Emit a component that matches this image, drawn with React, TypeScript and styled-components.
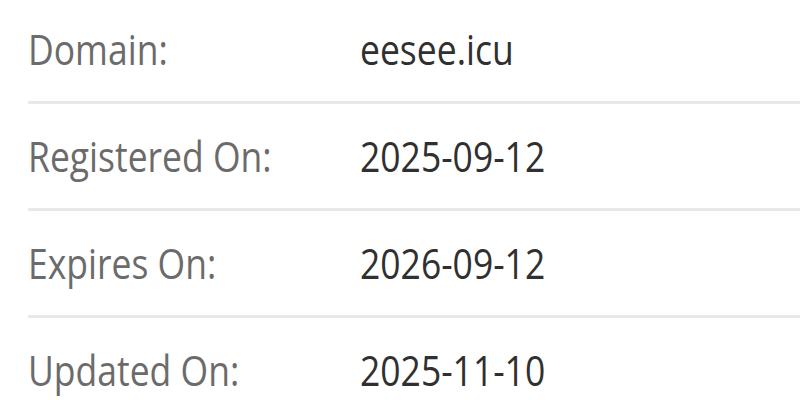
import styled, { createGlobalStyle } from "styled-components";

const GlobalStyle = createGlobalStyle`
  html, body {
    margin: 0;
    padding: 0;
    background: #ffffff;
    overflow: hidden;
  }
  body {
    font-family: "Open Sans", "Noto Sans", sans-serif;
  }
`;

const InfoList = styled.div`
  margin-top: -3px;
  padding-left: 28px;
  width: 772px;
`;

const InfoRow = styled.div`
  display: grid;
  grid-template-columns: 332px 1fr;
  align-items: baseline;
  padding: 23px 0 24px;
  border-bottom: 3px solid #e8e8e8;
`;

// the source text is a bit narrower than Open Sans, squeeze it horizontally
const Label = styled.span<{ $muted?: boolean }>`
  display: inline-block;
  font-size: 42px;
  line-height: 57px;
  transform: scaleX(0.845);
  transform-origin: left center;
  color: ${(props) => (props.$muted ? "#6b6b6b" : "#303030")};
  white-space: nowrap;
`;

const rows = [
  ["Domain:", "eesee.icu"],
  ["Registered On:", "2025-09-12"],
  ["Expires On:", "2026-09-12"],
  ["Updated On:", "2025-11-10"],
];

const App = () => {
  return (
    <>
      <GlobalStyle />
      <InfoList>
        {rows.map(([label, value]) => (
          <InfoRow key={label}>
            <Label $muted>{label}</Label>
            <Label>{value}</Label>
          </InfoRow>
        ))}
      </InfoList>
    </>
  );
};

export default App;
